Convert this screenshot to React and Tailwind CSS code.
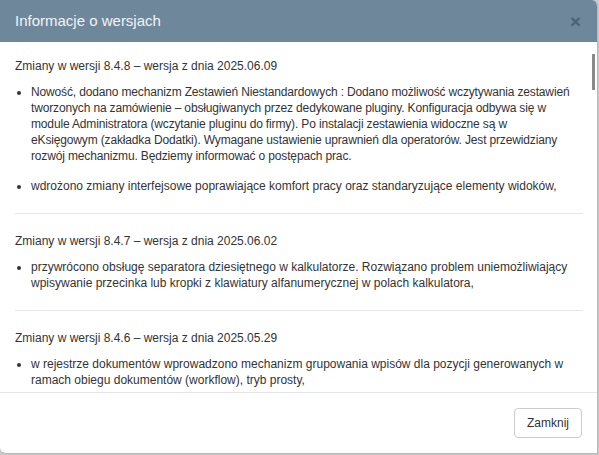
import React from "react";

const sections = [
  {
    title: "Zmiany w wersji 8.4.8 – wersja z dnia 2025.06.09",
    items: [
      {
        lines: [
          "Nowość, dodano mechanizm Zestawień Niestandardowych : Dodano możliwość wczytywania zestawień",
          "tworzonych na zamówienie – obsługiwanych przez dedykowane pluginy. Konfiguracja odbywa się w",
          "module Administratora (wczytanie pluginu do firmy). Po instalacji zestawienia widoczne są w",
          "eKsięgowym (zakładka Dodatki). Wymagane ustawienie uprawnień dla operatorów. Jest przewidziany",
          "rozwój mechanizmu. Będziemy informować o postępach prac.",
        ],
        c: "tracking-[-0.15px]",
      },
      {
        t: "wdrożono zmiany interfejsowe poprawiające komfort pracy oraz standaryzujące elementy widoków,",
        c: "",
      },
    ],
  },
  {
    title: "Zmiany w wersji 8.4.7 – wersja z dnia 2025.06.02",
    items: [
      {
        t: "przywrócono obsługę separatora dziesiętnego w kalkulatorze. Rozwiązano problem uniemożliwiający wpisywanie przecinka lub kropki z klawiatury alfanumerycznej w polach kalkulatora,",
        c: "",
      },
    ],
  },
  {
    title: "Zmiany w wersji 8.4.6 – wersja z dnia 2025.05.29",
    items: [
      {
        t: "w rejestrze dokumentów wprowadzono mechanizm grupowania wpisów dla pozycji generowanych w ramach obiegu dokumentów (workflow), tryb prosty,",
        c: "",
      },
    ],
  },
];

export default function App() {
  return (
    <div
      className="w-[599px] h-[455px] bg-[#c9c9c9] overflow-hidden"
      style={{ fontFamily: '"Liberation Sans", Arial, sans-serif' }}
    >
      <div className="relative w-[598px] h-[454px] bg-white rounded-tr-[6px] rounded-bl-[6px] border-r border-b border-[#b8b8b8] flex flex-col overflow-hidden">
        <div className="h-[42px] shrink-0 bg-[#6f879b] flex items-center justify-between pl-[15px] pr-[16px]">
          <span className="text-[15px] text-[#f2f4f6]">Informacje o wersjach</span>
          <span className="text-[19px] font-bold leading-none text-[#4d6174]">×</span>
        </div>
        <div className="relative h-[350px] shrink-0 overflow-hidden pl-[15px] pr-[14px]">
          {sections.map((s, i) => (
            <div
              key={i}
              className={`border-b border-[#e6e6e6] pb-[19px] w-[568px] ${i === 0 ? "pt-[16px]" : "pt-[19px]"}`}
            >
              <div className="text-[12px] leading-[16px] text-[#333]">{s.title}</div>
              <ul className="list-disc pl-[16px] mt-[10px] mr-[-6px] text-[12px] leading-[16px] text-[#333] flex flex-col gap-[14px]">
                {s.items.map((it, j) => (
                  <li key={j} className={it.c}>
                    {it.lines
                      ? it.lines.map((l, k) => (
                          <span key={k} className="block whitespace-nowrap">{l}</span>
                        ))
                      : it.t}
                  </li>
                ))}
              </ul>
            </div>
          ))}
          <div className="absolute right-[2px] top-[12px] w-[3px] h-[36px] bg-[#8a8a8a]" />
        </div>
        <div className="flex-1 border-t border-[#e5e5e5] flex items-start justify-end pr-[15px] pt-[15px]">
          <button className="h-[30px] px-[12px] border border-[#cccccc] rounded-[4px] bg-white text-[12px] text-[#333]">
            Zamknij
          </button>
        </div>
      </div>
    </div>
  );
}
